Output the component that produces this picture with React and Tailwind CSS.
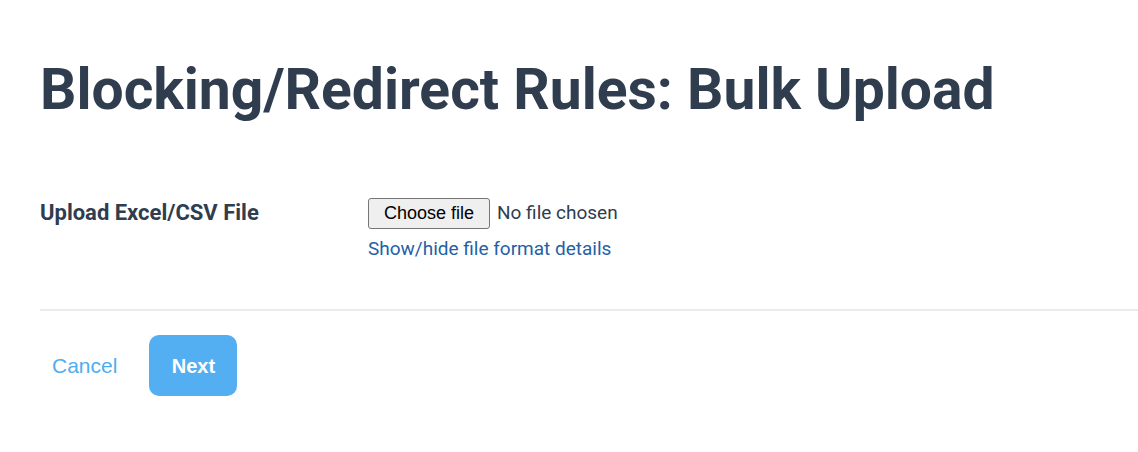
export default function App() {
  return (
    <div className="w-[1138px] h-[452px] bg-white overflow-hidden" style={{ fontFamily: "Roboto, sans-serif" }}>
      <div className="pl-10">
        <h1 className="pt-[54px] text-[57px] leading-[72px] font-bold text-[#2f3d4f]">
          Blocking/Redirect Rules: Bulk Upload
        </h1>
        <div className="mt-[72px] flex">
          <div className="w-[328px] text-[22px] font-bold text-[#2f3d4f] leading-[30px]">
            Upload Excel/CSV File
          </div>
          <div className="flex flex-col">
            <div className="flex items-center gap-[7px]">
              <button className="h-[31px] w-[122px] border border-[#767676] rounded-[3px] bg-[#efefef] text-[18px] text-black" style={{ fontFamily: '"Liberation Sans", Arial, sans-serif' }}>
                Choose file
              </button>
              <span className="text-[19px] text-[#2f3d4f]">No file chosen</span>
            </div>
            <a href="#" className="mt-[7px] text-[19px] text-[#2361a5] leading-[26px]">
              Show/hide file format details
            </a>
          </div>
        </div>
        <div className="mt-[47px] h-[2px] bg-[#ebebeb]" />
        <div className="mt-[24px] flex items-center">
          <a href="#" className="ml-3 text-[21px] text-[#4faded]" style={{ fontFamily: '"Liberation Sans", Arial, sans-serif' }}>Cancel</a>
          <button className="ml-[32px] w-[88px] h-[61px] rounded-[10px] bg-[#53aff1] text-white font-bold text-[20px]" style={{ fontFamily: '"Liberation Sans", Arial, sans-serif' }}>
            Next
          </button>
        </div>
      </div>
    </div>
  );
}
